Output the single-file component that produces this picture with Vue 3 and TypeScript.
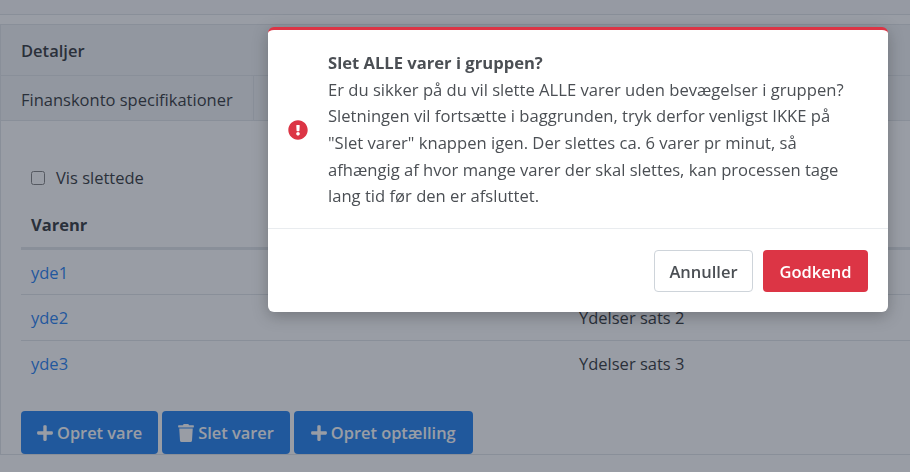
<template>
  <div class="page">
    <div class="topbar"></div>
    <section class="card">
      <header class="card-header">Detaljer</header>
      <nav class="tabs">
        <div class="tab">Finanskonto specifikationer</div>
      </nav>
      <div class="card-body">
        <label class="check">
          <input type="checkbox" />
          <span>Vis slettede</span>
        </label>
        <table class="grid">
          <thead>
            <tr>
              <th class="col-nr">Varenr</th>
              <th></th>
            </tr>
          </thead>
          <tbody>
            <tr v-for="row in rows" :key="row.nr">
              <td><a class="link">{{ row.nr }}</a></td>
              <td>{{ row.name }}</td>
            </tr>
          </tbody>
        </table>
        <div class="actions">
          <button class="btn" type="button">
            <svg class="fa" viewBox="0 0 448 512"><path :d="plus" /></svg>Opret vare
          </button>
          <button class="btn" type="button">
            <svg class="fa" viewBox="0 0 448 512"><path :d="trash" /></svg>Slet varer
          </button>
          <button class="btn btn-wide" type="button">
            <svg class="fa" viewBox="0 0 448 512"><path :d="plus" /></svg>Opret optælling
          </button>
        </div>
      </div>
    </section>

    <div class="overlay"></div>
    <div class="dialog">
      <div class="dialog-body">
        <svg class="alert-icon" viewBox="0 0 512 512"><path :d="alert" /></svg>
        <div class="message">
          <strong>Slet ALLE varer i gruppen?</strong>
          <p>
            Er du sikker på du vil slette ALLE varer uden bevægelser i gruppen? Sletningen vil
            fortsætte i baggrunden, tryk derfor venligst IKKE på "Slet varer" knappen igen. Der
            slettes ca. 6 varer pr minut, så afhængig af hvor mange varer der skal slettes, kan
            processen tage lang tid før den er afsluttet.
          </p>
        </div>
      </div>
      <div class="dialog-footer">
        <button class="btn-cancel" type="button">Annuller</button>
        <button class="btn-ok" type="button">Godkend</button>
      </div>
    </div>
  </div>
</template>

<script setup lang="ts">
// first row's name sits behind the dialog
const rows = [
  { nr: 'yde1', name: '' },
  { nr: 'yde2', name: 'Ydelser sats 2' },
  { nr: 'yde3', name: 'Ydelser sats 3' }
]

const plus =
  'M416 208H272V64c0-17.67-14.33-32-32-32h-32c-17.67 0-32 14.33-32 32v144H32c-17.67 0-32 14.33-32 32v32c0 17.67 14.33 32 32 32h144v144c0 17.67 14.33 32 32 32h32c17.67 0 32-14.33 32-32V304h144c17.67 0 32-14.33 32-32v-32c0-17.67-14.33-32-32-32z'
const trash =
  'M432 32H312l-9.4-18.7A24 24 0 0 0 281.1 0H166.8a23.72 23.72 0 0 0-21.4 13.3L136 32H16A16 16 0 0 0 0 48v32a16 16 0 0 0 16 16h416a16 16 0 0 0 16-16V48a16 16 0 0 0-16-16zM53.2 467a48 48 0 0 0 47.9 45h245.8a48 48 0 0 0 47.9-45L416 128H32z'
const alert =
  'M504 256c0 136.997-111.043 248-248 248S8 392.997 8 256C8 119.083 119.043 8 256 8s248 111.083 248 248zm-248 50c-25.405 0-46 20.595-46 46s20.595 46 46 46 46-20.595 46-46-20.595-46-46-46zm-43.673-165.346l7.418 136c.347 6.364 5.609 11.346 11.982 11.346h48.546c6.373 0 11.635-4.982 11.982-11.346l7.418-136c.375-6.874-5.098-12.654-11.982-12.654h-63.383c-6.884 0-12.356 5.78-11.981 12.654z'
</script>

<style>
html,
body {
  margin: 0;
  height: 100%;
  overflow: hidden;
}
</style>

<style scoped>
.page {
  height: 472px;
  overflow: hidden;
  background: #fff;
  color: #212529;
  font-family: "Open Sans", "Liberation Sans", sans-serif;
  font-size: 16.5px;
  line-height: 24px;
}

.topbar {
  height: 14px;
  margin-bottom: 9px;
  background: #f8f9fa;
  border-bottom: 1px solid #dee2e6;
}

.card {
  border: 1px solid #dee2e6;
  border-right: 0;
}

.card-header {
  height: 50px;
  padding-left: 20px;
  line-height: 52px;
  font-weight: 600;
  background: #f1f3f5;
  border-bottom: 1px solid #dee2e6;
}

.tabs {
  display: flex;
  height: 44px;
  background: #f1f3f5;
  border-bottom: 1px solid #dee2e6;
}

.tab {
  padding: 0 20px;
  line-height: 47px;
  border-right: 1px solid #dee2e6;
}

.card-body {
  padding: 45px 0 0 20px;
}

.check {
  display: flex;
  align-items: center;
  gap: 11px;
  height: 24px;
  padding-left: 10px;
}

.check input {
  width: 14px;
  height: 14px;
  margin: 0;
}

.grid {
  width: 100%;
  margin-top: 16px;
  border-collapse: collapse;
  table-layout: fixed;
}

.grid th {
  height: 42px;
  box-sizing: border-box;
  padding: 0 10px 3px;
  text-align: left;
  font-weight: 700;
  border-bottom: 3px solid #dee2e6;
}

.grid .col-nr {
  width: 548px;
}

.grid td {
  height: 46px;
  padding: 2px 10px 0;
  box-sizing: border-box;
  border-bottom: 1px solid #dee2e6;
}

.grid tr:last-child td {
  border-bottom: 0;
}

.link {
  color: #0d74f0;
}

.actions {
  display: flex;
  gap: 4px;
  margin-top: 25px;
}

.btn {
  display: flex;
  align-items: center;
  gap: 4px;
  height: 43px;
  padding: 0 16px;
  border: 0;
  border-radius: 4px;
  background: #0d74ec;
  color: #fff;
  font: inherit;
  font-size: 16.4px;
  font-weight: 600;
}

.btn-wide {
  padding: 0 17px;
}

.fa {
  width: 16px;
  height: 18px;
  fill: currentColor;
}

.overlay {
  position: fixed;
  inset: 0;
  background: rgba(52, 60, 76, 0.5);
}

.dialog {
  position: fixed;
  top: 27px;
  left: 268px;
  width: 620px;
  height: 285px;
  box-sizing: border-box;
  display: flex;
  flex-direction: column;
  background: #fff;
  border-top: 3px solid #dc3545;
  border-radius: 6px;
  box-shadow: 0 4px 16px rgba(0, 0, 0, 0.25);
  color: #4b4f54;
}

.dialog-body {
  display: flex;
  align-items: center;
  height: 199px;
  padding: 2px 20px 0;
  box-sizing: border-box;
  border-bottom: 1px solid #e9ecef;
}

.alert-icon {
  flex: none;
  width: 20px;
  height: 20px;
  margin-right: 20px;
  fill: #dc3545;
}

.message {
  font-size: 16.6px;
  line-height: 26.6px;
}

.message strong {
  font-weight: 700;
}

.message p {
  margin: 0;
}

.dialog-footer {
  display: flex;
  justify-content: flex-end;
  gap: 10px;
  padding: 21px 20px 0;
}

.btn-cancel,
.btn-ok {
  height: 42px;
  padding: 1px 0 0;
  border-radius: 4px;
  font: inherit;
  font-weight: 600;
}

.btn-cancel {
  width: 99px;
  background: #fff;
  border: 1px solid #ced4da;
  color: #4b4f54;
}

.btn-ok {
  width: 105px;
  background: #dc3545;
  border: 0;
  color: #fff;
}
</style>
